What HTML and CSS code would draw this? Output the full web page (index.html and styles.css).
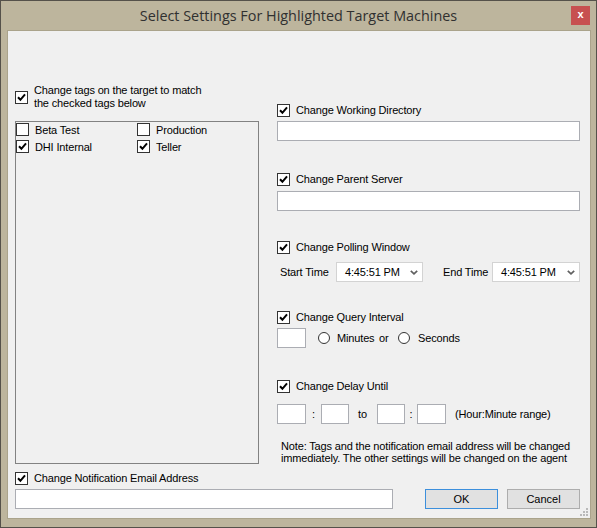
FILE: index.html
```html
<!DOCTYPE html>
<html lang="en">
<head>
    <meta charset="UTF-8">
    <title>Select Settings For Highlighted Target Machines</title>
    <link rel="stylesheet" href="styles.css">
</head>
<body>
    <div class="window">
        <div class="titlebar">
            <span class="title">Select Settings For Highlighted Target Machines</span>
            <span class="close">x</span>
        </div>

        <div class="client">
            <div class="main">
                <div class="left">
                    <label class="tags-head">
                        <span class="cb"><svg viewBox="0 0 11 11"><path d="M2 5.3 L4.4 7.8 L9 2.4"/></svg></span>
                        <span>Change tags on the target to match<br>the checked tags below</span>
                    </label>
                    <div class="taglist">
                        <div class="tag-grid">
                            <label class="tag"><span class="cb"></span>Beta Test</label>
                            <label class="tag"><span class="cb"></span>Production</label>
                            <label class="tag"><span class="cb"><svg viewBox="0 0 11 11"><path d="M2 5.3 L4.4 7.8 L9 2.4"/></svg></span>DHI Internal</label>
                            <label class="tag"><span class="cb"><svg viewBox="0 0 11 11"><path d="M2 5.3 L4.4 7.8 L9 2.4"/></svg></span>Teller</label>
                        </div>
                    </div>
                </div>

                <div class="right">
                    <div class="group">
                        <label class="check-row"><span class="cb"><svg viewBox="0 0 11 11"><path d="M2 5.3 L4.4 7.8 L9 2.4"/></svg></span>Change Working Directory</label>
                        <div class="text-input field-dir"></div>
                    </div>

                    <div class="group loose">
                        <label class="check-row"><span class="cb"><svg viewBox="0 0 11 11"><path d="M2 5.3 L4.4 7.8 L9 2.4"/></svg></span>Change Parent Server</label>
                        <div class="text-input field-server"></div>
                    </div>

                    <div class="group polling">
                        <label class="check-row"><span class="cb"><svg viewBox="0 0 11 11"><path d="M2 5.3 L4.4 7.8 L9 2.4"/></svg></span>Change Polling Window</label>
                        <div class="time-row">
                            <span class="lbl-start">Start Time</span>
                            <div class="combo start">4:45:51 PM<svg class="chev" viewBox="0 0 8 5"><path d="M0.8 0.8 L4 3.8 L7.2 0.8"/></svg></div>
                            <span class="lbl-end">End Time</span>
                            <div class="combo">4:45:51 PM<svg class="chev" viewBox="0 0 8 5"><path d="M0.8 0.8 L4 3.8 L7.2 0.8"/></svg></div>
                        </div>
                    </div>

                    <div class="group">
                        <label class="check-row"><span class="cb"><svg viewBox="0 0 11 11"><path d="M2 5.3 L4.4 7.8 L9 2.4"/></svg></span>Change Query Interval</label>
                        <div class="interval-row">
                            <div class="box"></div>
                            <span class="radio first"></span><span class="opt-minutes">Minutes</span>
                            <span class="opt-or">or</span>
                            <span class="radio"></span><span class="opt-seconds">Seconds</span>
                        </div>
                    </div>

                    <div class="group loose">
                        <label class="check-row"><span class="cb"><svg viewBox="0 0 11 11"><path d="M2 5.3 L4.4 7.8 L9 2.4"/></svg></span>Change Delay Until</label>
                        <div class="range-row">
                            <div class="box"></div>
                            <span class="sep">:</span>
                            <div class="box narrow"></div>
                            <span class="to">to</span>
                            <div class="box narrow"></div>
                            <span class="sep small">:</span>
                            <div class="box"></div>
                            <span class="hint">(Hour:Minute range)</span>
                        </div>
                    </div>

                    <p class="note">Note: Tags and the notification email address will be changed<br>immediately. The other settings will be changed on the agent</p>
                </div>
            </div>

            <div class="footer">
                <div class="email">
                    <label class="check-row"><span class="cb"><svg viewBox="0 0 11 11"><path d="M2 5.3 L4.4 7.8 L9 2.4"/></svg></span>Change Notification Email Address</label>
                    <div class="text-input field-email"></div>
                </div>
                <div class="buttons">
                    <button class="btn default">OK</button>
                    <button class="btn">Cancel</button>
                </div>
            </div>

            <svg class="grip" viewBox="0 0 10 10">
                <rect x="7" y="1" width="2" height="2"/>
                <rect x="4" y="4" width="2" height="2"/>
                <rect x="7" y="4" width="2" height="2"/>
                <rect x="1" y="7" width="2" height="2"/>
                <rect x="4" y="7" width="2" height="2"/>
                <rect x="7" y="7" width="2" height="2"/>
            </svg>
        </div>
    </div>
</body>
</html>
```

FILE: styles.css
```css
* {
    box-sizing: border-box;
}
body {
    margin: 0;
    font-family: "Liberation Sans", Arial, sans-serif;
    font-size: 11px;
    letter-spacing: -0.15px;
    color: #000;
}
.window {
    width: 597px;
    height: 528px;
    border: 1px solid #55514a;
    background: #bdb59d;
}
.titlebar {
    height: 29px;
    display: grid;
    grid-template-columns: 1fr auto 1fr;
    align-items: start;
}
.title {
    grid-column: 2;
    margin-top: 5px;
    font-family: "Open Sans", "Noto Sans", sans-serif;
    font-size: 14.4px;
    letter-spacing: 0;
    line-height: 20px;
    color: #303030;
}
.close {
    grid-column: 3;
    justify-self: end;
    width: 19px;
    height: 19px;
    margin: 5px 6px 0 0;
    background: #c75050;
    color: #fff;
    font-weight: bold;
    font-size: 11px;
    line-height: 17px;
    text-align: center;
}
.client {
    position: relative;
    margin: 0 5px 0 6px;
    height: 489px;
    border: 1px solid #aaa38b;
    background: #f0f0f0;
}
.main {
    display: flex;
    padding-left: 7px;
}
.left {
    width: 244px;
    padding-top: 53px;
}
.right {
    width: 303px;
    margin-left: 18px;
    padding-top: 72px;
}

/* checkboxes */
.cb {
    flex: none;
    width: 13px;
    height: 13px;
    border: 1px solid #333;
    background: #fff;
}
.cb svg {
    display: block;
    width: 11px;
    height: 11px;
    fill: none;
    stroke: #000;
    stroke-width: 2;
}
.tags-head {
    display: flex;
    align-items: center;
    gap: 6px;
    line-height: 13px;
}
.taglist {
    margin-top: 11px;
    height: 343px;
    border: 1px solid #828282;
}
.tag-grid {
    display: grid;
    grid-template-columns: 121px 121px;
    row-gap: 2px;
}
.tag {
    display: flex;
    align-items: center;
    gap: 6px;
    height: 15px;
}
.check-row {
    display: flex;
    align-items: center;
    gap: 6px;
    height: 14px;
}

/* right side groups */
.group + .group {
    margin-top: 28px;
}
.group.loose {
    margin-top: 31px;
}
.group.polling {
    margin-top: 29px;
}
.text-input {
    height: 20px;
    border: 1px solid #abadb3;
    background: #fff;
}
.field-dir {
    margin-top: 4px;
}
.field-server {
    margin-top: 5px;
}
.time-row {
    display: flex;
    align-items: center;
    margin-top: 8px;
}
.lbl-start {
    width: 59px;
    padding-left: 3px;
}
.lbl-end {
    width: 69px;
    padding-left: 20px;
}
.combo {
    display: flex;
    align-items: center;
    width: 88px;
    height: 20px;
    padding-left: 8px;
    border: 1px solid #d3d3d3;
    background: #fff;
}
.combo.start {
    width: 87px;
}
.chev {
    width: 8px;
    height: 5px;
    margin-left: auto;
    margin-right: 4px;
    fill: none;
    stroke: #606060;
    stroke-width: 1.7;
}
.interval-row,
.range-row {
    display: flex;
    align-items: center;
}
.interval-row {
    margin-top: 4px;
}
.range-row {
    margin-top: 11px;
}
.box {
    flex: none;
    width: 29px;
    height: 20px;
    border: 1px solid #abadb3;
    background: #fff;
}
.box.narrow {
    width: 28px;
}
.radio {
    flex: none;
    width: 12px;
    height: 12px;
    border: 1px solid #333;
    border-radius: 50%;
    background: #fff;
}
.radio.first {
    margin-left: 12px;
}
.opt-minutes {
    width: 42px;
    margin-left: 7px;
}
.opt-or {
    width: 19px;
}
.opt-seconds {
    margin-left: 8px;
}
.sep {
    width: 15px;
    text-align: center;
}
.sep.small {
    width: 12px;
}
.to {
    width: 28px;
    padding-left: 9px;
}
.hint {
    margin-left: 9px;
}
.note {
    margin: 16px 0 0;
    padding-left: 4px;
    line-height: 12px;
}

/* bottom */
.footer {
    display: flex;
    align-items: flex-end;
    padding-left: 7px;
}
.email {
    width: 378px;
}
.email .check-row {
    margin-top: 7px;
}
.field-email {
    margin-top: 4px;
}
.buttons {
    display: flex;
    gap: 9px;
    margin-left: 32px;
}
.btn {
    width: 73px;
    height: 20px;
    padding: 0;
    border: 1px solid #adadad;
    background: #e1e1e1;
    font-family: "Liberation Sans", Arial, sans-serif;
    font-size: 11px;
    color: #000;
}
.btn.default {
    border-color: #3c8fdc;
}
.grip {
    position: absolute;
    right: 1px;
    bottom: 1px;
    width: 10px;
    height: 10px;
    fill: #b9b9b9;
}
```
